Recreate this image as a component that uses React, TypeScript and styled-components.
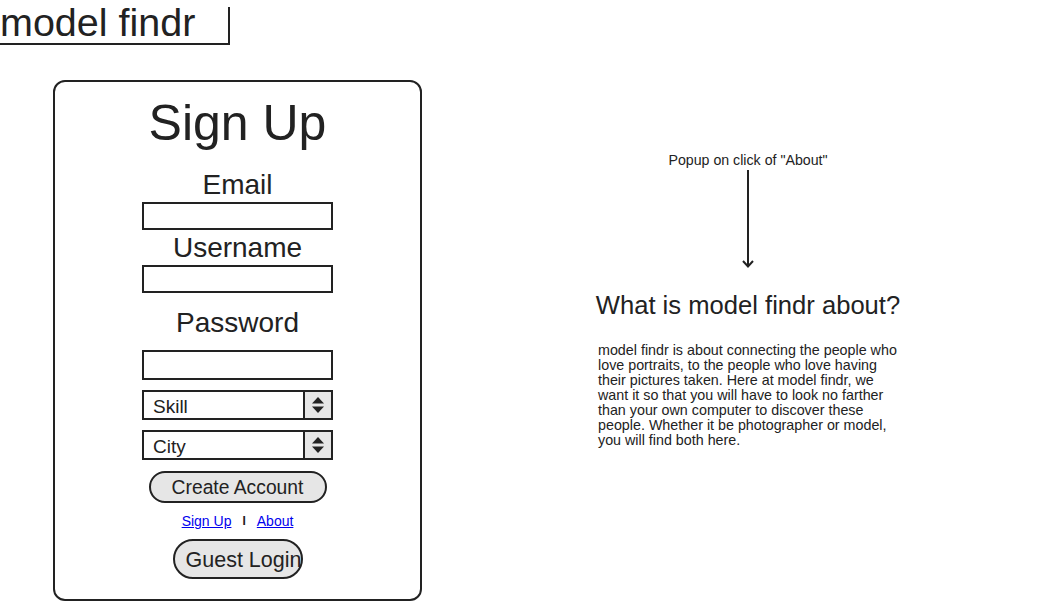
import styled, { createGlobalStyle } from "styled-components";

const GlobalStyle = createGlobalStyle`
  html, body {
    margin: 0;
    padding: 0;
    background: #ffffff;
  }

  body {
    font-family: 'Liberation Sans', Arial, sans-serif;
    color: #222222;
  }
`

const SelectArrows = () => (
  <svg width="14" height="20" viewBox="0 0 14 20">
    <polygon points="1,8.5 13,8.5 7,2" fill="#222"/>
    <polygon points="1,11.5 13,11.5 7,18" fill="#222"/>
  </svg>
)

const DownArrow = () => (
  <svg width="14" height="98" viewBox="0 0 14 98">
    <line x1="7" y1="0" x2="7" y2="97" stroke="#222" strokeWidth="2"/>
    <polyline points="2,91 7,96.5 12,91" fill="none" stroke="#222" strokeWidth="2"/>
  </svg>
)

const fields = ['Email', 'Username', 'Password']
const pickers = ['Skill', 'City']

const App = () => {
  return (
    <>
      <GlobalStyle/>
      <Header>
        <div className={'logo'}>model findr</div>
        <div className={'caret'}/>
      </Header>

      <Main>
        <Card>
          <Title>Sign Up</Title>

          {fields.map((name) => (
            <Field key={name} $name={name}>
              <label>{name}</label>
              <TextInput type={name === 'Password' ? 'password' : 'text'} $tall={name === 'Password'}/>
            </Field>
          ))}

          {pickers.map((name) => (
            <Select key={name}>
              <span>{name}</span>
              <div className={'arrows'}>
                <SelectArrows/>
              </div>
            </Select>
          ))}

          <CreateButton>Create Account</CreateButton>

          <Links>
            <a href={'#'}>Sign Up</a>
            <span>I</span>
            <a href={'#'}>About</a>
          </Links>

          <GuestButton>Guest Login</GuestButton>
        </Card>

        <About>
          <div className={'note'}>Popup on click of "About"</div>
          <div className={'arrow'}>
            <DownArrow/>
          </div>
          <h2>What is model findr about?</h2>
          <p>
            model findr is about connecting the people who love portraits, to the people who love having
            their pictures taken. Here at model findr, we want it so that you will have to look no farther
            than your own computer to discover these people. Whether it be photographer or model, you will
            find both here.
          </p>
        </About>
      </Main>
    </>
  )
}

const Header = styled.div`
  width: 230px;
  height: 45px;
  box-sizing: border-box;
  border-bottom: 2px solid #222;
  display: flex;
  justify-content: space-between;
  align-items: flex-end;

  & > .logo {
    align-self: flex-start;
    padding-top: 2px;
    font-size: 39.5px;
    line-height: 40px;
    white-space: nowrap;
  }

  & > .caret {
    width: 2px;
    height: 38px;
    margin-bottom: -2px;
    background: #222;
  }
`

const Main = styled.div`
  display: flex;
  align-items: flex-start;
  padding-left: 53px;
  margin-top: 35px;
`

const Card = styled.div`
  width: 369px;
  height: 521px;
  box-sizing: border-box;
  border: 2px solid #222;
  border-radius: 12px;
  display: flex;
  flex-direction: column;
  align-items: center;
  padding-top: 13px;
`

const Title = styled.h1`
  margin: 0;
  font-size: 50px;
  line-height: 56px;
  font-weight: 400;
`

const Field = styled.div<{ $name: string }>`
  display: flex;
  flex-direction: column;
  align-items: center;
  margin-top: ${({ $name }) => $name === 'Email' ? '20px' : $name === 'Username' ? '4px' : '16px'};

  & > label {
    font-size: 28px;
    line-height: 28px;
  }
`

const TextInput = styled.input<{ $tall?: boolean }>`
  display: block;
  width: 191px;
  height: ${({ $tall }) => $tall ? '30px' : '28px'};
  margin: ${({ $tall }) => $tall ? '13px 0 0' : '3px 0 0'};
  box-sizing: border-box;
  border: 2px solid #222;
  border-radius: 0;
  background: #fff;
  padding: 0 6px;
  font-family: 'Liberation Sans', Arial, sans-serif;
  font-size: 16px;
  outline: none;
`

const Select = styled.div`
  width: 191px;
  height: 30px;
  margin-top: 10px;
  box-sizing: border-box;
  border: 2px solid #222;
  display: flex;
  align-items: stretch;

  & > span {
    flex: 1;
    display: flex;
    align-items: center;
    padding-left: 9px;
    padding-top: 3px;
    font-size: 19px;
  }

  & > .arrows {
    width: 26px;
    border-left: 2px solid #222;
    background: #e6e6e6;
    display: flex;
    align-items: center;
    justify-content: center;
  }
`

const CreateButton = styled.button`
  width: 178px;
  height: 32px;
  margin-top: 11px;
  box-sizing: border-box;
  border: 2px solid #222;
  border-radius: 16px;
  background: #e6e6e6;
  color: #222;
  font-family: 'Liberation Sans', Arial, sans-serif;
  font-size: 19.3px;
  padding: 1px 0 0;
`

const Links = styled.div`
  margin-top: 10px;
  display: flex;
  align-items: center;
  gap: 11px;
  font-size: 14px;
  line-height: 16px;

  & > a {
    color: #0000ee;
    text-decoration: underline;
  }

  & > span {
    font-weight: 700;
    font-size: 12px;
  }
`

const GuestButton = styled.button`
  width: 130px;
  height: 40px;
  margin-top: 10px;
  box-sizing: border-box;
  border: 2px solid #222;
  border-radius: 20px;
  background: #e6e6e6;
  color: #222;
  font-family: 'Liberation Sans', Arial, sans-serif;
  font-size: 21.5px;
  text-align: left;
  white-space: nowrap;
  padding: 2px 0 0 11px;
`

const About = styled.div`
  width: 310px;
  margin-left: 171px;
  display: flex;
  flex-direction: column;
  align-items: center;

  & > .note {
    margin-top: 72px;
    font-size: 14.2px;
    line-height: 16px;
    white-space: nowrap;
  }

  & > .arrow {
    margin-top: 2px;
    height: 98px;

    svg {
      display: block;
    }
  }

  & > h2 {
    margin: 22px 0 0;
    font-size: 25.6px;
    line-height: 30px;
    font-weight: 400;
    white-space: nowrap;
  }

  & > p {
    align-self: flex-start;
    width: 302px;
    margin: 23px 0 0 5px;
    font-size: 14.3px;
    line-height: 15px;
  }
`

export default App
